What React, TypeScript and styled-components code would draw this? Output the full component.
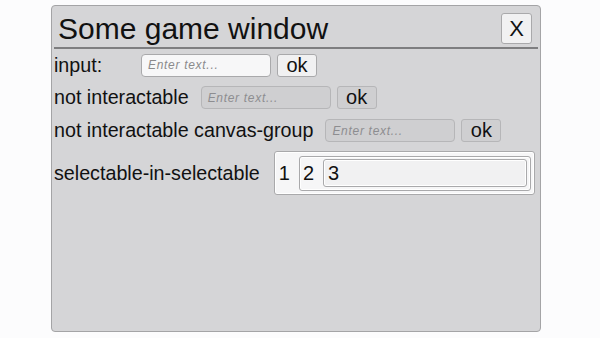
import React from "react";
import styled, { createGlobalStyle } from "styled-components";

const Global = createGlobalStyle`
  html, body { margin: 0; padding: 0; background: #fcfcfd; }
  body { font-family: "Liberation Sans", Arial, sans-serif; }
`;

const Window = styled.div`
  box-sizing: border-box;
  margin: 5px 0 0 51px;
  width: 490px;
  height: 327px;
  background: #d5d5d7;
  border: 1px solid #a4a4a6;
  border-radius: 4px;
  padding: 0 1px;
  display: flex;
  flex-direction: column;
`;

const Header = styled.div`
  display: flex;
  align-items: center;
  justify-content: space-between;
  height: 41px;
  margin: 0 1px;
  padding: 0 6px 0 4px;
  border-bottom: 2px solid #7e7e80;
`;

const Title = styled.div`
  font-size: 30px;
  color: #111;
  margin-top: 4px;
`;

const CloseButton = styled.button`
  box-sizing: border-box;
  width: 31px;
  height: 31px;
  margin-top: 4px;
  background: #f1f1f2;
  border: 1px solid #a9a9ab;
  border-radius: 3px;
  font-family: inherit;
  font-size: 22px;
  color: #111;
  padding: 0;
  display: flex;
  align-items: center;
  justify-content: center;
`;

const Body = styled.div`
  display: flex;
  flex-direction: column;
  padding: 0 0 0 1px;
`;

const Row = styled.div<{ $h: number }>`
  display: flex;
  align-items: center;
  height: ${(p) => p.$h}px;
`;

const Label = styled.div<{ $min?: number; $gap?: number }>`
  font-size: 19.7px;
  color: #111;
  min-width: ${(p) => p.$min ?? 0}px;
  margin-right: ${(p) => p.$gap ?? 12}px;
  white-space: nowrap;
`;

const Field = styled.div<{ $disabled?: boolean }>`
  box-sizing: border-box;
  width: 130px;
  height: 23px;
  border-radius: 4px;
  border: 1px solid ${(p) => (p.$disabled ? "#b6b6b8" : "#a9a9ab")};
  background: ${(p) => (p.$disabled ? "#cfcfd1" : "#f7f7f8")};
  display: flex;
  align-items: center;
  padding-left: 6px;
  font-size: 12px;
  letter-spacing: 0.7px;
  font-style: italic;
  color: ${(p) => (p.$disabled ? "#8d8d90" : "#8a8a8c")};
`;

const OkButton = styled.button<{ $disabled?: boolean }>`
  box-sizing: border-box;
  width: 40px;
  height: 23px;
  margin-left: 6px;
  border-radius: 3px;
  border: 1px solid ${(p) => (p.$disabled ? "#b6b6b8" : "#a9a9ab")};
  background: ${(p) => (p.$disabled ? "#cfcfd1" : "#f1f1f2")};
  font-family: inherit;
  font-size: 20px;
  color: #111;
  padding: 0 0 1px 0;
  line-height: 1;
`;

const Sel = styled.div<{ $h: number; $pl: number; $inner?: boolean }>`
  box-sizing: border-box;
  flex: 1;
  height: ${(p) => p.$h}px;
  margin-right: 3px;
  border: 1px solid #a9a9ab;
  border-radius: 3px;
  background: ${(p) => (p.$inner ? "#f1f1f2" : "#f6f6f7")};
  display: flex;
  align-items: center;
  padding-left: ${(p) => p.$pl}px;
  gap: 9px;
  font-size: 20px;
  color: #111;
  box-shadow: inset 0 0 0 1px #ffffff;
`;

const OuterSel = styled(Sel)`
  flex: none;
  width: 261px;
  margin-right: 0;
`;

export default function App() {
  return (
    <>
      <Global />
      <Window>
        <Header>
          <Title>Some game window</Title>
          <CloseButton>X</CloseButton>
        </Header>
        <Body>
          <Row $h={32}>
            <Label $min={74} $gap={13}>input:</Label>
            <Field>Enter text...</Field>
            <OkButton>ok</OkButton>
          </Row>
          <Row $h={33}>
            <Label>not interactable</Label>
            <Field $disabled>Enter text...</Field>
            <OkButton $disabled>ok</OkButton>
          </Row>
          <Row $h={33}>
            <Label>not interactable canvas-group</Label>
            <Field $disabled>Enter text...</Field>
            <OkButton $disabled>ok</OkButton>
          </Row>
          <Row $h={52}>
            <Label $gap={14}>selectable-in-selectable</Label>
            <OuterSel $h={44} $pl={4}>
              <span>1</span>
              <Sel $h={35} $pl={3}>
                <span>2</span>
                <Sel $h={28} $pl={4} $inner>
                  <span>3</span>
                </Sel>
              </Sel>
            </OuterSel>
          </Row>
        </Body>
      </Window>
    </>
  );
}
